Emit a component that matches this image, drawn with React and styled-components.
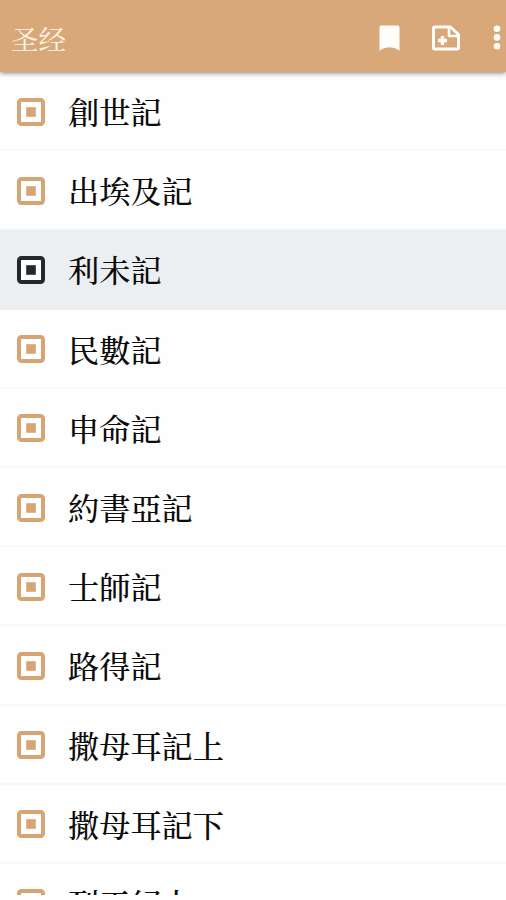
import React, {useState} from 'react'
import styled, {createGlobalStyle} from 'styled-components'

const GlobalStyle = createGlobalStyle`
body {
    margin: 0;
    background: #fefefe;
}
`;

const Screen = styled.div`
display: flex;
flex-direction: column;
width: 506px;
height: 895px;
overflow: hidden;
background: #fefefe;
font-family: "Noto Serif CJK TC", "Noto Sans CJK TC", serif;
`;

const TopBar = styled.header`
display: flex;
flex: none;
align-items: center;
justify-content: space-between;
box-sizing: border-box;
height: 72px;
padding: 3px 5px 0 11px;
background: #d8a878;
box-shadow: 0 1px 5px rgba(0, 0, 0, 0.5);
z-index: 1;
`;

const Title = styled.h1`
margin: 0;
padding-top: 1px;
font-family: "Noto Serif CJK SC", "Noto Sans CJK SC", serif;
font-size: 27.5px;
font-weight: 400;
line-height: 36px;
color: #fff4e8;
`;

const Actions = styled.div`
display: flex;
align-items: center;
`;

const ActionButton = styled.button`
display: flex;
padding: 0;
margin-left: ${props => props.$gap || 0}px;
border: 0;
background: none;
color: #fffdfa;
`;

const BookList = styled.ul`
flex: none;
margin: 0;
padding: 0;
list-style: none;
`;

const BookRow = styled.li`
display: flex;
align-items: center;
box-sizing: border-box;
height: 79.2px;
padding: 2px 0 0 17px;
border-bottom: 2px solid ${props => props.$active ? '#eceff1' : '#f8f8f8'};
background: ${props => props.$active ? '#eceff2' : '#fefefe'};
color: ${props => props.$active ? '#25282b' : '#d7a474'};
`;

const BookName = styled.span`
margin: 0 0 1px 23px;
font-size: 31.2px;
font-weight: 500;
line-height: 44px;
color: #0c0c0c;
`;

const books = ['創世記', '出埃及記', '利未記', '民數記', '申命記', '約書亞記', '士師記', '路得記', '撒母耳記上', '撒母耳記下', '列王紀上']

function BookmarkIcon() {
    return (
        <svg width="21" height="26" viewBox="0 0 21 26">
            <path d="M2 .5h17q1.500 0 1.500 1.500v23.500Q10.500 19 .5 25.500V2Q.5.5 2 .5z" fill="currentColor"/>
        </svg>
    )
}

function NoteAddIcon() {
    return (
        <svg width="30" height="26" viewBox="0 0 30 26" fill="none" stroke="currentColor" strokeWidth="3" strokeLinejoin="round">
            <path d="M4 2H19.500L27.500 9.500V22.500Q27.500 24 26 24H4Q2.500 24 2.500 22.500V3.500Q2.500 2 4 2z"/>
            <path d="M18 2.500V11H27" strokeWidth="2.600"/>
            <path d="M11.500 11v9M7 15.500h9" strokeWidth="3.400"/>
        </svg>
    )
}

function MoreIcon() {
    return (
        <svg width="8" height="26" viewBox="0 0 8 26" fill="currentColor">
            <circle cx="4" cy="3.700" r="3.300"/>
            <circle cx="4" cy="12.400" r="3.300"/>
            <circle cx="4" cy="21.200" r="3.300"/>
        </svg>
    )
}

function BookIcon() {
    return (
        <svg width="28" height="28" viewBox="0 0 28 28">
            <rect x="2" y="2" width="24" height="24" rx="2.500" fill="#fff" stroke="currentColor" strokeWidth="4"/>
            <rect x="9.200" y="9.200" width="9.600" height="9.600" fill="currentColor"/>
        </svg>
    )
}

function App() {

    const [selected, setSelected] = useState(2);

    return (
        <>
            <GlobalStyle/>
            <Screen>
                <TopBar>
                    <Title>圣经</Title>
                    <Actions>
                        <ActionButton><BookmarkIcon/></ActionButton>
                        <ActionButton $gap={31}><NoteAddIcon/></ActionButton>
                        <ActionButton $gap={32}><MoreIcon/></ActionButton>
                    </Actions>
                </TopBar>
                <BookList>
                    {books.map((book, i) => (
                        <BookRow key={book} $active={i === selected} onClick={() => setSelected(i)}>
                            <BookIcon/>
                            <BookName>{book}</BookName>
                        </BookRow>
                    ))}
                </BookList>
            </Screen>
        </>
    )
}

export default App
